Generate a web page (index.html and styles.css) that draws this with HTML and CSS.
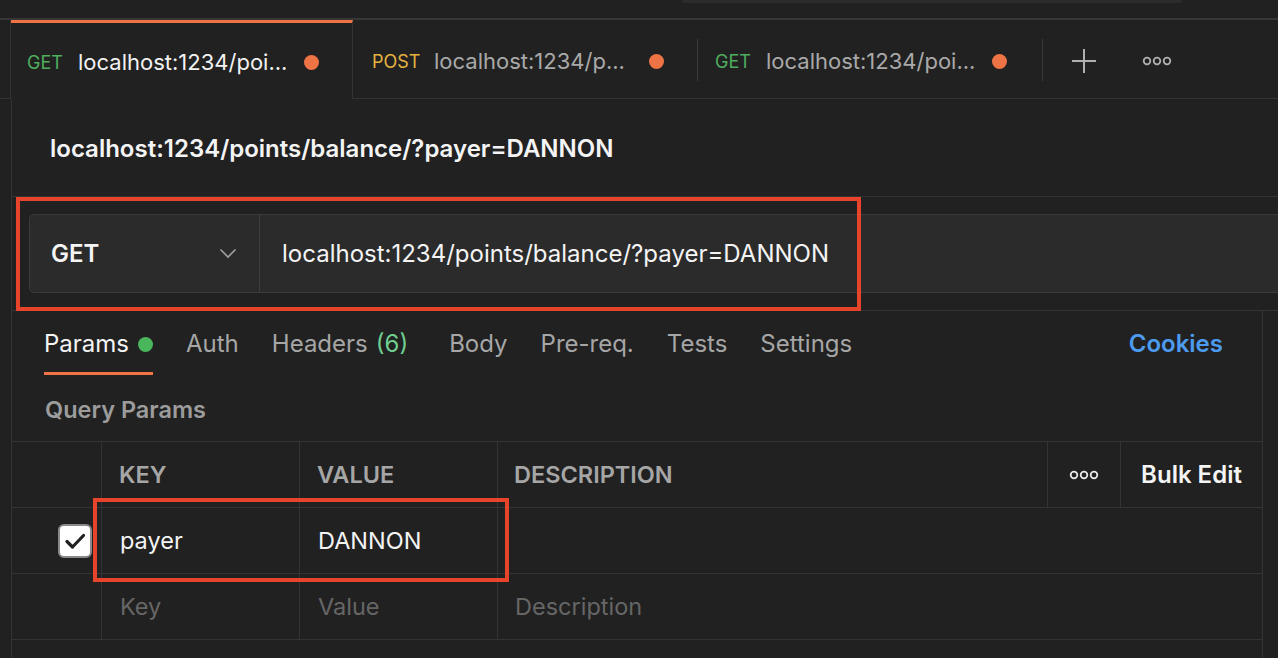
FILE: index.html
```html
<!DOCTYPE html>
<html>
<head>
<meta charset="utf-8">
<link rel="stylesheet" href="styles.css">
</head>
<body>
<div class="topbar"><div class="search"></div></div>
<div class="tabbar">
  <div class="gutter"></div>
  <div class="tab active"><span class="m get">GET</span><span class="u">localhost:1234/poi...</span><span class="dot"></span></div>
  <div class="tab t2"><span class="m post">POST</span><span class="u">localhost:1234/p...</span><span class="dot"></span></div>
  <div class="sepwrap"><div class="sep"></div></div>
  <div class="tab t3"><span class="m get">GET</span><span class="u">localhost:1234/poi...</span><span class="dot"></span></div>
  <div class="sepwrap"><div class="sep"></div></div>
  <div class="tab-actions">
    <svg class="plus" width="26" height="26" viewBox="0 0 26 26"><path d="M13 1v24M1 13h24" stroke="#b0b0b0" stroke-width="2" fill="none"/></svg>
    <svg class="more" width="30" height="10" viewBox="0 0 30 10"><circle cx="5" cy="5" r="3.3" stroke="#b0b0b0" stroke-width="1.8" fill="none"/><circle cx="15" cy="5" r="3.3" stroke="#b0b0b0" stroke-width="1.8" fill="none"/><circle cx="25" cy="5" r="3.3" stroke="#b0b0b0" stroke-width="1.8" fill="none"/></svg>
  </div>
</div>
<div class="main">
  <div class="title">localhost:1234/points/balance/?payer=DANNON</div>
  <div class="request">
    <div class="urlbox">
      <div class="method"><span>GET</span>
        <svg width="18" height="11" viewBox="0 0 18 11"><path d="M1.5 1.5l7.5 7.5 7.5-7.5" stroke="#a0a0a0" stroke-width="1.6" fill="none"/></svg>
      </div>
      <div class="url">localhost:1234/points/balance/?payer=DANNON</div>
    </div>
    <div class="annot annot1"></div>
  </div>
  <div class="body">
    <div class="pane">
      <div class="subtabs">
        <div class="st on">Params<span class="gdot"></span></div>
        <div class="st">Auth</div>
        <div class="st hdr">Headers<span class="cnt">(6)</span></div>
        <div class="st">Body</div>
        <div class="st">Pre-req.</div>
        <div class="st">Tests</div>
        <div class="st">Settings</div>
        <div class="st cookies">Cookies</div>
      </div>
      <div class="qp">Query Params</div>
      <div class="grid">
        <div class="row head">
          <div class="c c1"></div>
          <div class="c c2">KEY</div>
          <div class="c c3">VALUE</div>
          <div class="c c4">DESCRIPTION</div>
          <div class="c c5"><svg width="30" height="10" viewBox="0 0 30 10"><circle cx="5" cy="5" r="3.3" stroke="#e8e8e8" stroke-width="1.8" fill="none"/><circle cx="15" cy="5" r="3.3" stroke="#e8e8e8" stroke-width="1.8" fill="none"/><circle cx="25" cy="5" r="3.3" stroke="#e8e8e8" stroke-width="1.8" fill="none"/></svg></div>
          <div class="c c6">Bulk Edit</div>
        </div>
        <div class="row">
          <div class="c c1"><span class="check"><svg width="22" height="18" viewBox="0 0 22 18"><path d="M3 9.5l5.5 5.5L19.5 3.5" stroke="#222" stroke-width="3.2" fill="none" stroke-linecap="round" stroke-linejoin="round"/></svg></span></div>
          <div class="c c2 val">payer</div>
          <div class="c c3 val">DANNON</div>
          <div class="c c4"></div>
          <div class="c c5"></div>
          <div class="c c6"></div>
        </div>
        <div class="row">
          <div class="c c1"></div>
          <div class="c c2 ph">Key</div>
          <div class="c c3 ph">Value</div>
          <div class="c c4 ph">Description</div>
          <div class="c c5"></div>
          <div class="c c6"></div>
        </div>
        <div class="annot annot2"></div>
      </div>
    </div>
    <div class="side"></div>
  </div>
</div>
</body>
</html>
```
FILE: styles.css
```css
* { box-sizing: border-box; }
html, body { margin: 0; padding: 0; }
body {
  background: #212121;
  font-family: Inter, "Noto Sans", sans-serif;
  color: #fff;
  width: 1278px;
  height: 658px;
  overflow: hidden;
}
.topbar { height: 18px; padding-left: 682px; }
.search { width: 500px; height: 3px; background: #2c2c2c; border-radius: 0 0 6px 6px; }
.tabbar {
  display: flex;
  height: 81px;
  border-top: 2px solid #363636;
}
.gutter { width: 11px; border-bottom: 1px solid #333; border-right: 1px solid #333; }
.tab {
  display: flex;
  align-items: center;
  border-bottom: 1px solid #333;
  height: 79px;
  padding-top: 4px;
  white-space: nowrap;
}
.tab.active {
  width: 342px;
  border-top: 3px solid #ef7445;
  border-right: 1px solid #333;
  border-bottom: none;
  padding-left: 16px;
  padding-top: 2px;
}
.t2 { width: 344px; padding-left: 19px; }
.t3 { width: 344px; padding-left: 17px; }
.m { font-size: 18px; }
.get { color: #4fae5e; }
.post { color: #e6b33f; }
.u { font-size: 22px; color: #a9a9a9; }
.active .m { width: 51px; }
.active .u { color: #f2f2f2; }
.t2 .m { width: 62px; }
.t3 .m { width: 51px; }
.dot { width: 15px; height: 15px; border-radius: 50%; background: #ef7445; margin-left: auto; margin-right: 33px; flex: none; }
.t2 .dot { margin-right: 33px; }
.t3 .dot { margin-right: 35px; }
.sepwrap { width: 1px; border-bottom: 1px solid #333; display: flex; align-items: center; padding-top: 2px; }
.sep { width: 1px; height: 42px; background: #3a3a3a; }
.tab-actions {
  flex: 1;
  display: flex;
  align-items: center;
  border-bottom: 1px solid #333;
  padding-left: 28px;
  padding-top: 3px;
}
.more { margin-left: 45px; }

.main { margin-left: 11px; border-left: 1px solid #333; }
.title {
  height: 98px;
  border-bottom: 1px solid #333;
  padding-left: 38px;
  display: flex;
  align-items: center;
  font-size: 24px;
  font-weight: 600;
  color: #f4f4f4;
  padding-top: 1px;
}
.request {
  position: relative;
  height: 114px;
  border-bottom: 1px solid #333;
  padding: 17px 0 0 17px;
}
.urlbox {
  display: flex;
  height: 79px;
  width: 1300px;
  background: #2b2b2b;
  border: 1px solid #3a3a3a;
  border-radius: 5px;
}
.method {
  width: 230px;
  border-right: 1px solid #3e3e3e;
  display: flex;
  align-items: center;
  justify-content: space-between;
  padding: 0 22px 0 21px;
  font-size: 24px;
  font-weight: 600;
  color: #f4f4f4;
}
.url {
  display: flex;
  align-items: center;
  padding-left: 22px;
  font-size: 24px;
  color: #f4f4f4;
}
.annot { position: absolute; border: 4px solid #e8432b; }
.annot1 { left: 4px; top: 0; width: 845px; height: 114px; }
.annot2 { left: 81px; top: 56px; width: 416px; height: 84px; }

.body { display: flex; }
.pane { width: 1251px; border-right: 1px solid #333; height: 347px; }
.side { flex: 1; }
.subtabs { display: flex; padding-left: 32px; padding-right: 39px; }
.st {
  font-size: 24px;
  color: #a6a6a6;
  line-height: 26px;
  padding: 20px 0 15px;
  border-bottom: 3px solid transparent;
  margin-right: 33px;
  display: flex;
  align-items: center;
  white-space: nowrap;
}
.st.on { color: #f4f4f4; border-bottom-color: #ef7445; }
.st.hdr { margin-right: 41px; }
.gdot { width: 15px; height: 15px; border-radius: 50%; background: #49b65b; margin-left: 9px; }
.cnt { color: #6fcf90; margin-left: 8px; }
.cookies { margin-left: auto; margin-right: 0; color: #4d9bef; font-weight: 600; }
.qp {
  font-size: 23.5px;
  font-weight: 600;
  color: #9c9c9c;
  line-height: 26px;
  margin: 22px 0 18px 33px;
}
.grid { position: relative; border-top: 1px solid #333; }
.row { display: grid; grid-template-columns: 90px 198px 198px 550px 73px 141px; height: 66px; border-bottom: 1px solid #333; }
.c { border-right: 1px solid #333; display: flex; align-items: center; font-size: 23.5px; padding-left: 17px; white-space: nowrap; }
.c6 { border-right: none; }
.head .c { font-weight: 600; color: #a6a6a6; }
.head .c4 { padding-left: 16px; }
.head .c5 { justify-content: center; padding-left: 0; }
.head .c6 { justify-content: center; padding-left: 0; color: #f4f4f4; font-size: 24px; }
.row:not(.head) .c4 { border-right: none; }
.row:not(.head) .c5 { border-right: none; }
.c1 { justify-content: flex-end; padding-right: 9px; }
.check {
  width: 34px; height: 34px;
  background: #fff;
  border: 2px solid #8a8a8a;
  border-radius: 6px;
  display: flex; align-items: center; justify-content: center;
}
.val { color: #f4f4f4; padding-left: 18px; }
.ph { color: #666; padding-left: 18px; }
.row .c4.ph { padding-left: 17px; }
```
